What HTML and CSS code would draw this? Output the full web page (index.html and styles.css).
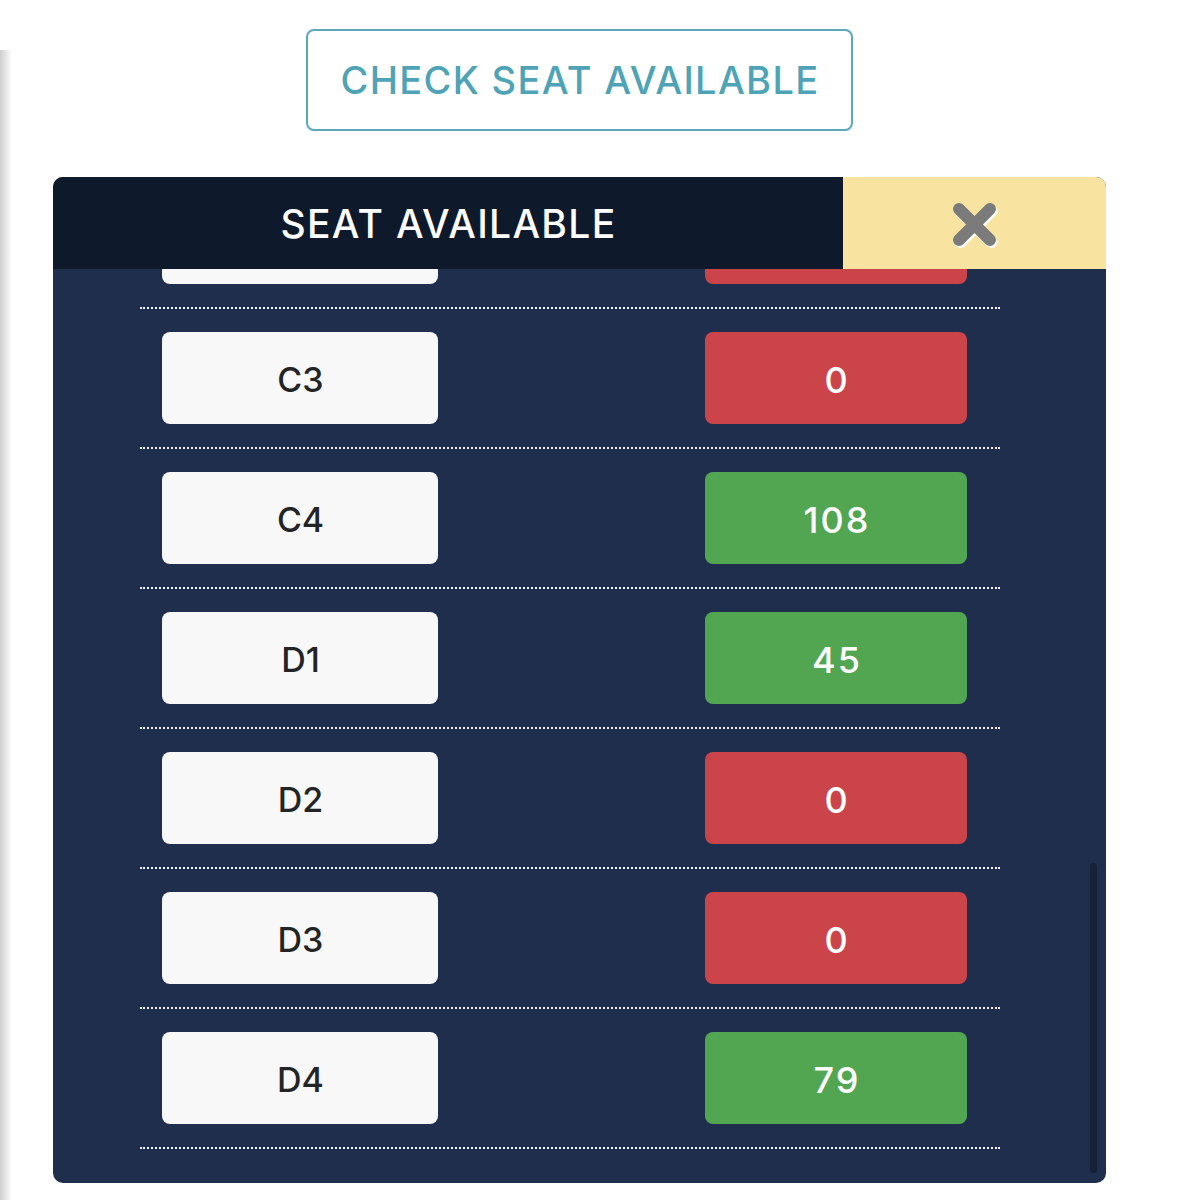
FILE: index.html
```html
<!DOCTYPE html>
<html>
<head>
<meta charset="utf-8">
<link rel="stylesheet" href="styles.css">
</head>
<body>
<div class="edge-shadow"></div>
<div class="page">
  <div class="btn-wrap">
    <button class="check-btn">CHECK SEAT AVAILABLE</button>
  </div>
  <div class="panel">
    <div class="panel-head">
      <div class="panel-title">SEAT AVAILABLE</div>
      <div class="panel-close">
        <svg width="52" height="52" viewBox="0 0 52 52">
          <g stroke-linecap="round" stroke-width="12" fill="none">
            <path d="M10 10 L41 41 M41 10 L10 41" stroke="#ffffff" transform="translate(1.5,2)"/>
            <path d="M10 10 L41 41 M41 10 L10 41" stroke="#7b7b7b"/>
          </g>
        </svg>
      </div>
    </div>
    <div class="panel-body">
      <div class="list">
        <div class="row"><div class="zone"></div><div class="count red"></div></div>
        <div class="row"><div class="zone">C3</div><div class="count red">0</div></div>
        <div class="row"><div class="zone">C4</div><div class="count green">108</div></div>
        <div class="row"><div class="zone">D1</div><div class="count green">45</div></div>
        <div class="row"><div class="zone">D2</div><div class="count red">0</div></div>
        <div class="row"><div class="zone">D3</div><div class="count red">0</div></div>
        <div class="row"><div class="zone">D4</div><div class="count green">79</div></div>
      </div>
      <div class="scrollbar"></div>
    </div>
  </div>
</div>
</body>
</html>
```
FILE: styles.css
```css
html, body {
  margin: 0;
  padding: 0;
  background: #ffffff;
}
body {
  font-family: Inter, "Open Sans", sans-serif;
  width: 1190px;
  height: 1200px;
  overflow: hidden;
  position: relative;
}
.edge-shadow {
  position: absolute;
  left: 0;
  top: 50px;
  width: 12px;
  height: 1150px;
  background: linear-gradient(to right, #cfcfcf, #e6e6e6 50%, #ffffff);
}
.page {
  margin-left: 53px;
  width: 1053px;
  padding-top: 29px;
}
.btn-wrap {
  display: flex;
  justify-content: center;
}
.check-btn {
  width: 547px;
  height: 102px;
  box-sizing: border-box;
  border: 2px solid #5ba8ba;
  border-radius: 8px;
  background: #ffffff;
  color: #4ea3b6;
  font-family: Inter, "Open Sans", sans-serif;
  font-size: 38px;
  font-weight: 500;
  padding: 0 0 0 1px;
  letter-spacing: 1.3px;
}
.panel {
  margin-top: 46px;
  height: 1006px;
  border-radius: 10px;
  overflow: hidden;
  background: #1f2e4c;
  display: flex;
  flex-direction: column;
}
.panel-head {
  height: 92px;
  display: flex;
  flex-shrink: 0;
  position: relative;
  z-index: 2;
}
.panel-title {
  width: 790px;
  background: #0e192b;
  color: #ffffff;
  display: flex;
  align-items: center;
  justify-content: center;
  font-size: 39px;
  font-weight: 500;
  letter-spacing: 1.3px;
  padding-left: 1px;
  box-sizing: border-box;
}
.panel-close {
  flex: 1;
  background: #f9e3a0;
  display: flex;
  align-items: center;
  justify-content: center;
  padding-top: 4px;
}
.panel-body {
  flex: 1;
  overflow: hidden;
  position: relative;
}
.list {
  margin-top: -100px;
  margin-left: 87px;
  width: 860px;
}
.row {
  display: flex;
  padding: 23px 33px 23px 22px;
  border-bottom: 2px dotted #f4f4f4;
  align-items: center;
  justify-content: space-between;
}
.zone, .count {
  height: 92px;
  border-radius: 8px;
  display: flex;
  align-items: center;
  justify-content: center;
  font-size: 34px;
  font-weight: 500;
  padding: 3px 0 0 1px;
  box-sizing: border-box;
}
.zone {
  width: 276px;
  background: #f8f8f9;
  color: #222426;
}
.count {
  width: 262px;
  color: #ffffff;
  font-size: 36px;
  letter-spacing: 2px;
  padding-left: 2px;
}
.red { background: #cb444a; }
.green { background: #53a651; }
.scrollbar {
  position: absolute;
  right: 9px;
  top: 594px;
  width: 7px;
  height: 310px;
  border-radius: 4px;
  background: #152139;
}
```
